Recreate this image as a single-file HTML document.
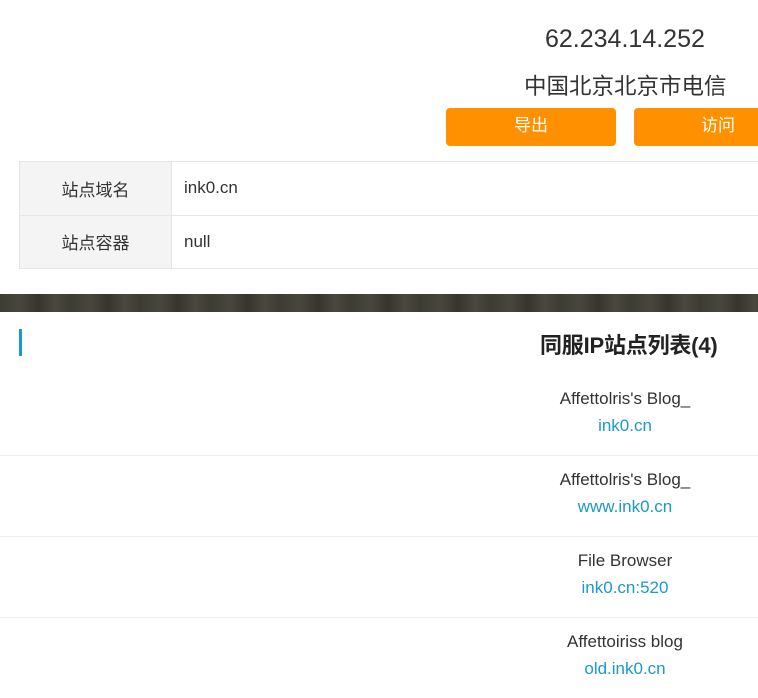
<!DOCTYPE html>
<html><head><meta charset="utf-8"><style>
body{margin:0;width:758px;height:686px;overflow:hidden;background:#fff;font-family:"Liberation Sans","Noto Sans CJK SC",sans-serif;color:#333;position:relative}
.a{position:absolute}
.btn{position:absolute;top:108px;height:38px;background:#ff9100;border-radius:4px;color:#fff;font-size:17px;line-height:36px}
table{position:absolute;left:19px;top:161px;width:760px;border-collapse:collapse}
td{border:1px solid #e6e6e6;height:53.5px;padding:0;font-size:17px;box-sizing:border-box}
td.l{width:152px;background:#f4f4f4;text-align:center}
td.r{padding-left:12px}
.wood{position:absolute;left:0;top:294px;width:758px;height:18px;background:repeating-linear-gradient(90deg,#3d3c33 0,#48473d 20px,#36352d 38px,#4a483e 55px,#3d3c33 70px)}
.row{position:absolute;left:0;width:758px;height:81px;border-bottom:1px solid #f0f0f0;text-align:center}
.row .t{position:absolute;left:0;width:1250px;top:15px;font-size:17px;color:#333}
.row .u{position:absolute;left:0;width:1250px;top:42px;font-size:17px;color:#1a9ac9}
</style></head><body>
<div class="a" style="left:545px;top:25px;font-size:25px">62.234.14.252</div>
<div class="a" style="left:524px;top:69px;font-size:22.5px">中国北京北京市电信</div>
<div class="btn" style="left:446px;width:170px;text-align:center">导出</div>
<div class="btn" style="left:634px;width:170px;padding-left:0"><span style="position:absolute;left:67px">访问</span></div>
<table><tr><td class="l">站点域名</td><td class="r">ink0.cn</td></tr><tr><td class="l">站点容器</td><td class="r">null</td></tr></table>
<div class="wood"></div>
<div class="a" style="left:19px;top:329px;width:3px;height:27px;background:#1a9ac9"></div>
<div class="a" style="left:540px;top:328px;font-size:22px;font-weight:bold;color:#222;letter-spacing:-0.2px">同服IP站点列表(4)</div>
<div class="row" style="top:374px"><div class="t">Affettolris's Blog_</div><div class="u">ink0.cn</div></div>
<div class="row" style="top:455px"><div class="t">Affettolris's Blog_</div><div class="u">www.ink0.cn</div></div>
<div class="row" style="top:536px"><div class="t">File Browser</div><div class="u">ink0.cn:520</div></div>
<div class="row" style="top:617px;border:none"><div class="t">Affettoiriss blog</div><div class="u">old.ink0.cn</div></div>
</body></html>
